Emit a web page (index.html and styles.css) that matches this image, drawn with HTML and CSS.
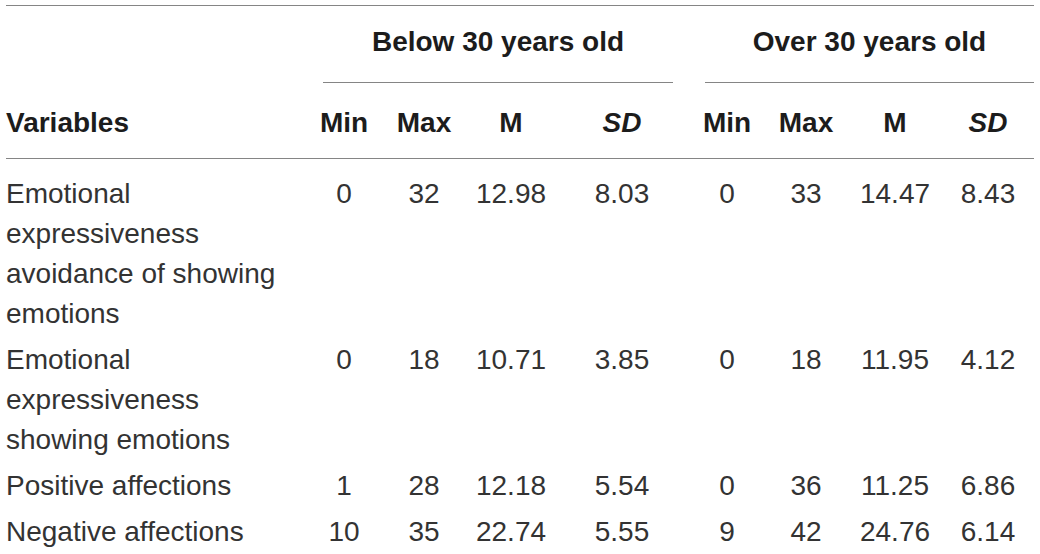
FILE: index.html
```html
<!DOCTYPE html>
<html lang="en">
<head>
<meta charset="utf-8">
<title>Descriptive statistics by age group</title>
<link rel="stylesheet" href="styles.css">
</head>
<body>
<div class="table">
  <div class="row group-row">
    <div class="cell label"></div>
    <div class="group group-a">Below 30 years old</div>
    <div class="group group-b">Over 30 years old</div>
  </div>
  <div class="row head-row">
    <div class="cell label">Variables</div>
    <div class="cell num">Min</div>
    <div class="cell num">Max</div>
    <div class="cell num">M</div>
    <div class="cell num"><i>SD</i></div>
    <div class="cell num">Min</div>
    <div class="cell num">Max</div>
    <div class="cell num">M</div>
    <div class="cell num"><i>SD</i></div>
  </div>
  <div class="body">
    <div class="row data-row">
      <div class="cell label">Emotional expressiveness avoidance of showing emotions</div>
      <div class="cell num">0</div>
      <div class="cell num">32</div>
      <div class="cell num">12.98</div>
      <div class="cell num">8.03</div>
      <div class="cell num">0</div>
      <div class="cell num">33</div>
      <div class="cell num">14.47</div>
      <div class="cell num">8.43</div>
    </div>
    <div class="row data-row">
      <div class="cell label">Emotional expressiveness showing emotions</div>
      <div class="cell num">0</div>
      <div class="cell num">18</div>
      <div class="cell num">10.71</div>
      <div class="cell num">3.85</div>
      <div class="cell num">0</div>
      <div class="cell num">18</div>
      <div class="cell num">11.95</div>
      <div class="cell num">4.12</div>
    </div>
    <div class="row data-row">
      <div class="cell label">Positive affections</div>
      <div class="cell num">1</div>
      <div class="cell num">28</div>
      <div class="cell num">12.18</div>
      <div class="cell num">5.54</div>
      <div class="cell num">0</div>
      <div class="cell num">36</div>
      <div class="cell num">11.25</div>
      <div class="cell num">6.86</div>
    </div>
    <div class="row data-row">
      <div class="cell label">Negative affections</div>
      <div class="cell num">10</div>
      <div class="cell num">35</div>
      <div class="cell num">22.74</div>
      <div class="cell num">5.55</div>
      <div class="cell num">9</div>
      <div class="cell num">42</div>
      <div class="cell num">24.76</div>
      <div class="cell num">6.14</div>
    </div>
  </div>
</div>
</body>
</html>
```
FILE: styles.css
```css
html, body {
  margin: 0;
  padding: 0;
  background: #ffffff;
}

body {
  padding-top: 5px;
  font-family: "Liberation Sans", Arial, Helvetica, sans-serif;
  font-size: 28px;
  line-height: 40px;
  color: #333333;
}

.table {
  margin-left: 6px;
  width: 1028px;
  border-top: 1px solid #858585;
}

.row {
  display: grid;
  grid-template-columns: 298px 80px 80px 94px 128px 82px 76px 102px 88px;
}

.cell {
  white-space: nowrap;
}

.cell.label {
  white-space: normal;
  padding-right: 10px;
}

.num {
  text-align: center;
}

.data-row .num:last-child {
  padding-right: 4px;
}

.group-row,
.head-row {
  font-weight: bold;
  color: #1c1c1c;
}

.head-row .num:last-child {
  padding-right: 4px;
}

.group {
  text-align: center;
  padding: 16px 0 20px;
  border-bottom: 1px solid #858585;
  white-space: nowrap;
}

.group-a {
  grid-column: 2 / span 4;
  margin-left: 19px;
  margin-right: 13px;
}

.group-b {
  grid-column: 6 / span 4;
  margin-left: 19px;
}

.head-row {
  padding: 20px 0 15px;
  border-bottom: 1px solid #858585;
}

.head-row i {
  font-style: italic;
}

.body {
  padding-top: 12px;
}

.data-row {
  padding: 3px 0;
}
```
